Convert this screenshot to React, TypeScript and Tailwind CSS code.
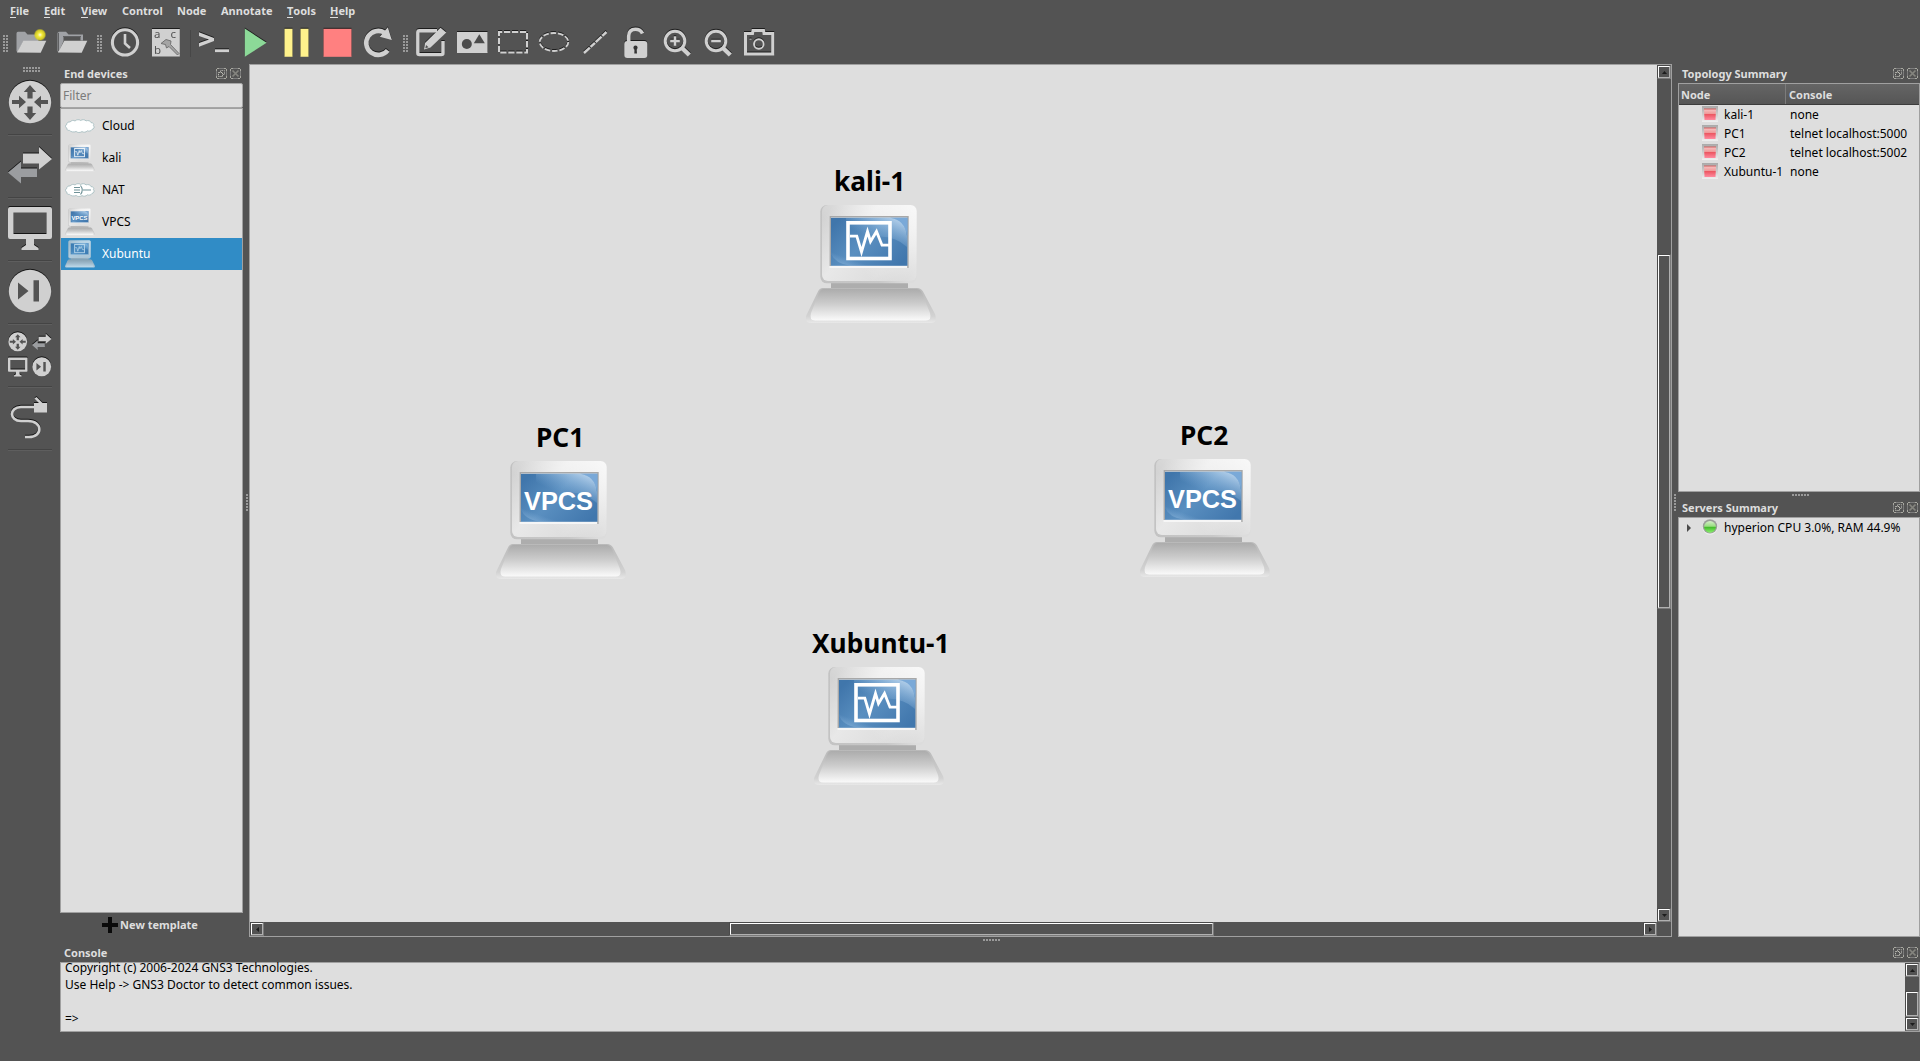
import React from 'react';

const UI = "font-['Noto_Sans','Open_Sans',sans-serif]";
const L = '#d0d0d0';

function Icon({ children, className = '' }: { children: React.ReactNode; className?: string }) {
  return (
    <div className="flex w-[41px] shrink-0 items-center justify-center">
      <svg viewBox="0 0 32 32" className={`h-8 w-8 shrink-0 drop-shadow-[0_-1px_0_rgba(20,20,20,0.85)] ${className}`}>
        {children}
      </svg>
    </div>
  );
}

function VDots({ rows = 6, cols = 2 }: { rows?: number; cols?: number }) {
  return (
    <div className="flex gap-[1px]">
      {Array.from({ length: cols }, (_, c) => (
        <div key={c} className="flex flex-col gap-[1px]">
          {Array.from({ length: rows }, (_, r) => (
            <div key={r} className="h-[2px] w-[2px] bg-[#9a9a9a]" />
          ))}
        </div>
      ))}
    </div>
  );
}

function HDots({ rows = 1 }: { rows?: number }) {
  return (
    <div className="flex flex-col gap-[1px]">
      {Array.from({ length: rows }, (_, r) => (
        <div key={r} className="flex gap-[1px]">
          {Array.from({ length: 6 }, (_, c) => (
            <div key={c} className="h-[2px] w-[2px] bg-[#9a9a9a]" />
          ))}
        </div>
      ))}
    </div>
  );
}

function MenuBar() {
  const items: [string, boolean, string][] = [
    ['File', true, 'w-[34px]'],
    ['Edit', true, 'w-[37px]'],
    ['View', true, 'w-[41px]'],
    ['Control', false, 'w-[55px]'],
    ['Node', false, 'w-[44px]'],
    ['Annotate', false, 'w-[66px]'],
    ['Tools', true, 'w-[43px]'],
    ['Help', true, 'w-[40px]'],
  ];
  return (
    <div className="flex h-[22px] items-center pl-[10px] text-[11px] font-bold">
      {items.map(([t, u, w]) => (
        <div key={t} className={`${w} shrink-0 whitespace-nowrap leading-[22px]`}>
          {u ? (
            <>
              <span className="inline-block h-[14px] border-b border-[#dedede] leading-[14px]">{t[0]}</span>
              {t.slice(1)}
            </>
          ) : (
            t
          )}
        </div>
      ))}
    </div>
  );
}

function Toolbar() {
  return (
    <div className="flex h-[42px] items-center">
      <div className="w-[10.5px] shrink-0 pl-[3px]"><VDots /></div>
      <Icon className="drop-shadow-none">
        <defs>
          <radialGradient id="glow">
            <stop offset="0" stopColor="#fffde0" />
            <stop offset="0.35" stopColor="#f3ea3c" />
            <stop offset="0.75" stopColor="#e2d81e" stopOpacity="0.85" />
            <stop offset="1" stopColor="#c9c020" stopOpacity="0" />
          </radialGradient>
        </defs>
        <path d="M1.5 24V6.5Q1.5 4.8 3 4.8H10L12.5 7.5H23.5V14H8.5L2.5 25.5Z" fill="#a0a2a6" />
        <path d="M2 25.5L8.3 13.8H31.3L25.7 25.7Z" fill={L} />
        <circle cx="25" cy="7.8" r="6.3" fill="url(#glow)" />
      </Icon>
      <Icon className="drop-shadow-none">
        <path d="M1.5 24V6.5Q1.5 4.8 3 4.8H10L12.5 7.5H27V13.5H24.5V10H7.5V14L2.5 25.5Z" fill="#a0a2a6" />
        <path d="M2.5 24V5.8M7 9.5H25" stroke="#2e2e2e" strokeWidth="0.8" opacity=".7" />
        <path d="M2 25.5L8.3 13.8H31.3L25.7 25.7Z" fill={L} />
      </Icon>
      <div className="w-3 shrink-0 pl-[4px]"><VDots /></div>
      <Icon>
        <circle cx="16" cy="15.4" r="12.6" fill="#4f4f4f" stroke={L} strokeWidth="3.1" />
        <path d="M16 7V16.5L21 21" fill="none" stroke={L} strokeWidth="2.6" />
      </Icon>
      <Icon>
        <rect x="2" y="2" width="27.8" height="27.5" fill={L} />
        <g fill="#535353" fontFamily="Noto Sans, sans-serif" fontSize="11.5">
          <text x="4" y="11">a</text>
          <text x="20.5" y="11">c</text>
          <text x="4" y="27">b</text>
        </g>
        <path d="M11 16.5L16 12.5L21 14L20.5 17.5L29 26.5L27.5 28L19 19.5L16.5 21L15.5 17.5Z" fill="#a5a5a5" stroke="#6b6b6b" strokeWidth="0.9" />
      </Icon>
      <div className="flex w-[7px] shrink-0 justify-center"><div className="h-[27px] w-px bg-[#474747]" /></div>
      <Icon>
        <path d="M1 5.2L16 11V14L1 19.8V16L11 12.6L1 9Z" fill={L} />
        <rect x="17" y="22.3" width="14" height="2.8" fill={L} />
      </Icon>
      <Icon><path d="M5.8 1.6L27.6 15.7L5.8 29.8Z" fill="#8cd998" /></Icon>
      <Icon><path d="M4.5 1.8H12.5V29.8H4.5ZM20.5 1.8H28.5V29.8H20.5Z" fill="#fff28c" /></Icon>
      <Icon><rect x="2.5" y="1.8" width="28" height="28" fill="#ff8080" /></Icon>
      <Icon>
        <path d="M25.7 23.3A12 12 0 1 1 22.4 5.6" fill="none" stroke={L} strokeWidth="4.6" />
        <path d="M25.8 0.3L29.8 13L17.8 9.8Z" fill={L} />
      </Icon>
      <div className="w-3 shrink-0 pl-[4px]"><VDots /></div>
      <Icon>
        <path d="M22 3.8H4.5Q2.8 3.8 2.8 5.5V26Q2.8 27.6 4.5 27.6H26.2Q28 27.6 28 26V14" fill="none" stroke={L} strokeWidth="3.4" />
        <path d="M9 22.5L10 16L25.5 0.8L31.3 5.5L15.5 20.5Z" fill={L} />
        <path d="M10.3 21.2L11 18L13.6 20.2Z" fill="#535353" />
      </Icon>
      <Icon>
        <rect x="1" y="5" width="30.5" height="21" fill={L} />
        <circle cx="10.8" cy="17" r="5" fill="#4c4c4c" />
        <path d="M23.3 7.3L28.8 16.2H17.8Z" fill="#4c4c4c" />
      </Icon>
      <Icon>
        <rect x="2" y="5" width="28" height="20.5" fill="none" stroke={L} strokeWidth="2" strokeDasharray="6.2 1.8" strokeDashoffset="3" />
      </Icon>
      <Icon>
        <ellipse cx="16" cy="15" rx="14.3" ry="9" fill="none" stroke={L} strokeWidth="1.8" strokeDasharray="5.6 1.8" />
      </Icon>
      <Icon>
        <path d="M5 26L27.5 5" stroke={L} strokeWidth="2.4" strokeDasharray="8 1 6 1" />
      </Icon>
      <Icon>
        <path d="M8.7 15V9Q8.7 2.3 15.5 2.3Q20.5 2.3 22.5 6.5" fill="none" stroke={L} strokeWidth="3.6" />
        <rect x="4.3" y="14" width="23" height="17" rx="3" fill={L} />
        <circle cx="15.5" cy="20.7" r="2.1" fill="#333" />
        <path d="M14.5 21H16.6L17 26.5H14.3Z" fill="#333" />
      </Icon>
      <Icon>
        <circle cx="14" cy="14" r="9.8" fill="none" stroke={L} strokeWidth="3" />
        <path d="M21 21L28.3 28" stroke={L} strokeWidth="4.4" />
        <path d="M14 9.2V18.8M9.2 14H18.8" stroke={L} strokeWidth="2.5" />
      </Icon>
      <Icon>
        <circle cx="14" cy="14" r="9.8" fill="none" stroke={L} strokeWidth="3" />
        <path d="M21 21L28.3 28" stroke={L} strokeWidth="4.4" />
        <path d="M9.2 14H18.8" stroke={L} strokeWidth="2.5" />
      </Icon>
      <Icon>
        <path d="M2.5 6.5H9.5L10 3.5H20.5L21 6.5H29.7V27H2.5Z" fill="none" stroke={L} strokeWidth="3" />
        <circle cx="15.8" cy="17" r="4.8" fill="none" stroke={L} strokeWidth="1.9" />
        <rect x="6.5" y="11.5" width="2" height="1.5" fill="#999" />
      </Icon>
    </div>
  );
}

const RouterGlyph = () => (
  <>
    <circle cx="22" cy="22" r="21.2" fill={L} />
    <path
      d="M22 5L28.2 12H24.6V18.5H19.4V12H15.8ZM22 40L28.2 33H24.6V26.5H19.4V33H15.8ZM4 20H11V15.8L18 22L11 28.2V24H4ZM40 20H33V15.8L26 22L33 28.2V24H40Z"
      fill="#535353"
    />
  </>
);
const ArrowsGlyph = () => (
  <>
    <path d="M0 29.5L13 18.5V25.5H29V34H13V40.5Z" fill="#9b9da0" />
    <path d="M15 10.5H31V4L44 16L31 26.5V20.5H15Z" fill={L} />
  </>
);
const MonitorGlyph = () => (
  <>
    <path d="M2 1H42Q44 1 44 3V31Q44 33 42 33H26V39L30.5 42V44H13.5V42L18 39V33H2Q0 33 0 31V3Q0 1 2 1ZM5.5 6.5V28H38.5V6.5Z" fillRule="evenodd" fill={L} />
  </>
);
const SecurityGlyph = () => (
  <>
    <circle cx="22" cy="22" r="21.2" fill={L} />
    <path d="M10 13.5L20.5 22L10 30.5ZM25.5 11.2H31V32.5H25.5Z" fill="#535353" />
  </>
);

function SideIcon({ children, size = 'h-[44px] w-[44px]' }: { children: React.ReactNode; size?: string }) {
  return (
    <svg viewBox="0 0 44 44" className={`${size} shrink-0 overflow-visible drop-shadow-[0_-1px_0_rgba(10,10,10,0.85)]`}>
      {children}
    </svg>
  );
}

function Sidebar() {
  const cell = 'flex h-[63px] w-[44px] items-center justify-center border-b border-[#444] pb-[2px] shadow-[0_1px_0_#5e5e5e]';
  return (
    <div className="flex w-[60px] shrink-0 flex-col items-center">
      <div className="flex h-[8px] w-full items-end justify-center pl-[3px]"><HDots rows={2} /></div>
      <div className={cell}><SideIcon><RouterGlyph /></SideIcon></div>
      <div className={cell}><SideIcon><ArrowsGlyph /></SideIcon></div>
      <div className={cell}><SideIcon><MonitorGlyph /></SideIcon></div>
      <div className={cell}><SideIcon><SecurityGlyph /></SideIcon></div>
      <div className={cell}>
        <div className="grid w-[44px] grid-cols-2 gap-x-[4.5px] gap-y-[5px]">
          <SideIcon size="h-[19.5px] w-[19.5px]"><RouterGlyph /></SideIcon>
          <SideIcon size="h-[19.5px] w-[19.5px]"><ArrowsGlyph /></SideIcon>
          <SideIcon size="h-[19.5px] w-[19.5px]"><MonitorGlyph /></SideIcon>
          <SideIcon size="h-[19.5px] w-[19.5px]"><SecurityGlyph /></SideIcon>
        </div>
      </div>
      <div className={cell}>
        <SideIcon>
          <path d="M27 12H13C1 12 1 26 13 26H20C35 26 35 42 21 42H17" fill="none" stroke={L} strokeWidth="2.6" />
          <path d="M26 8H31L26.5 3.5L28.5 2L34.5 8H39V17.5H26Z" fill={L} />
        </SideIcon>
      </div>
    </div>
  );
}

const FrameCorners = () => (
  <>
    <path d="M1 0.5H10M1 10.5H10M0.5 1V10M10.5 1V10" stroke="#7c7c7c" />
    <path d="M1 0.5H3M8 0.5H10M1 10.5H3M8 10.5H10M0.5 1V3M0.5 8V10M10.5 1V3M10.5 8V10" stroke="#a8a8a0" />
  </>
);

function DockButtons() {
  return (
    <div className="flex gap-[3px]">
      <svg viewBox="0 0 11 11" className="h-[11px] w-[11px]" fill="none">
        <FrameCorners />
        <path d="M4.5 4V2.5H8.5V6.5H7" stroke="#a4a4a0" strokeDasharray="1.6 0.8" />
        <rect x="2.5" y="4.5" width="4" height="4" stroke="#bcbcb4" strokeDasharray="1.4 0.8" />
      </svg>
      <svg viewBox="0 0 11 11" className="h-[11px] w-[11px]" fill="none">
        <FrameCorners />
        <path d="M2.5 2.5L8.5 8.5M8.5 2.5L2.5 8.5" stroke="#85857f" strokeWidth="1.7" />
      </svg>
    </div>
  );
}

function DockTitle({ children }: { children: React.ReactNode }) {
  return (
    <div className="flex h-[19px] shrink-0 items-center justify-between pl-[4px] pr-[2px] text-[11px] font-bold">
      <span className="pt-[2px]">{children}</span>
      <DockButtons />
    </div>
  );
}

function Computer({ kind, className, x = '' }: { kind: 'vbox' | 'vpcs'; className: string; x?: string }) {
  return (
    <svg viewBox="0 0 130 118" className={`${className} shrink-0 ${x}`}>
      <defs>
        <linearGradient id="case" x1="0" y1="0.2" x2="1" y2="0.8">
          <stop offset="0" stopColor="#d3d3d3" />
          <stop offset="0.35" stopColor="#e8e8e8" />
          <stop offset="0.75" stopColor="#dedede" />
          <stop offset="1" stopColor="#d0d0d0" />
        </linearGradient>
        <linearGradient id="caseTop" x1="0" y1="0.6" x2="1" y2="0">
          <stop offset="0.2" stopColor="#fff" stopOpacity="0" />
          <stop offset="1" stopColor="#fff" stopOpacity="0.8" />
        </linearGradient>
        <linearGradient id="edge" x1="0" y1="0" x2="1" y2="0.1">
          <stop offset="0" stopColor="#c2c2c2" />
          <stop offset="0.7" stopColor="#c8c8c8" />
          <stop offset="1" stopColor="#dcdcdc" />
        </linearGradient>
        <linearGradient id="scr" x1="0" y1="0.2" x2="1" y2="0.8">
          <stop offset="0" stopColor="#4076ab" />
          <stop offset="0.45" stopColor="#5a8fc0" />
          <stop offset="1" stopColor="#4177ad" />
        </linearGradient>
        <linearGradient id="gloss" x1="0.3" y1="0.6" x2="0.9" y2="0">
          <stop offset="0" stopColor="#8db8e0" stopOpacity="0" />
          <stop offset="1" stopColor="#c5dcf2" stopOpacity="0.95" />
        </linearGradient>
        <linearGradient id="gloss2" x1="0.5" y1="0.3" x2="0" y2="1">
          <stop offset="0.3" stopColor="#8db8e0" stopOpacity="0" />
          <stop offset="1" stopColor="#a5c6e4" stopOpacity="0.7" />
        </linearGradient>
        <linearGradient id="base" x1="0" y1="0" x2="0" y2="1">
          <stop offset="0" stopColor="#acacac" />
          <stop offset="0.45" stopColor="#cbcbcb" />
          <stop offset="1" stopColor="#fafafa" />
        </linearGradient>
        <linearGradient id="baseEdge" x1="0" y1="0" x2="0" y2="1">
          <stop offset="0" stopColor="#b9b9b9" />
          <stop offset="0.8" stopColor="#d2d2d2" />
          <stop offset="1" stopColor="#e8e8e8" />
        </linearGradient>
      </defs>
      <rect x="25" y="74" width="77" height="10" fill="#adadad" />
      <path d="M17 83H111Q115 83 117 86.5L129 109Q132 118 124.5 118H5.5Q-2 118 0.5 110L12 86.5Q13.5 83 17 83Z" fill="url(#baseEdge)" />
      <path d="M17.5 84H110.5Q114 84 116 88L124 108Q126 115.5 120 115.5H9Q3 115.5 5 108L13 88Q14.5 84 17.5 84Z" fill="url(#base)" />
      <rect x="14.3" y="0" width="96.4" height="78.3" rx="6.5" fill="url(#edge)" />
      <rect x="16" y="0" width="94.7" height="76" rx="6" fill="url(#case)" />
      <rect x="16" y="0" width="94.7" height="76" rx="6" fill="url(#caseTop)" />
      <path d="M23.5 11H102.7V63H23.5Z" fill="#f6f6f6" />
      <path d="M23.5 11H102.7V63H101.2V12.5H25V61H23.5Z" fill="#a8a8a8" />
      <rect x="25" y="12.8" width="76.4" height="48" fill="url(#scr)" />
      <path d="M84 12.8H101.4V31Q98 15 84 12.8Z" fill="#7aa9d8" />
      <path d="M40 12.8H84Q99 15 101 31V42Q80 22 40 40Z" fill="url(#gloss)" />
      <path d="M25 42Q50 52 62 60.8H44Q28 58 25 48Z" fill="url(#gloss2)" />
      {kind === 'vbox' ? (
        <>
          <rect x="42" y="17.8" width="42" height="35.7" fill="none" stroke="#fff" strokeWidth="3.6" />
          <path d="M44 31.2H50.8L55.5 47L61.5 26.5L64.5 36.5L70.5 26.5L76 40.2H83" fill="none" stroke="#fff" strokeWidth="2.8" />
        </>
      ) : (
        <text x="62.5" y="48.5" textAnchor="middle" textLength="69" lengthAdjust="spacingAndGlyphs" fill="#fff" fontFamily="Liberation Sans, Arial, sans-serif" fontWeight="700" fontSize="25.5">
          VPCS
        </text>
      )}
    </svg>
  );
}

function Cloud({ nat = false }: { nat?: boolean }) {
  return (
    <svg viewBox="0 0 30 14" className="h-[14px] w-[30px] shrink-0">
      <path
        d="M4.5 11.4C2.5 11.6 1.6 10.6 2 9.3C0 8.6 0 6 1.8 5.4C1.6 3.4 3.6 2.6 5.2 3C6.2 1.2 8.6 1 10 2C11.6 0.3 14.4 0.4 15.6 1.5C17.4 0.2 20 0.6 21 1.9C23.2 1 25.6 1.9 26 3.6C28.2 3.6 29.4 5.2 28.4 6.6C29.8 8 29 10.2 27 10.4C26.4 12 24 12.6 22.4 11.8C21 13.4 18.4 13.6 17 12.6C15 13.9 12.4 13.7 11.2 12.5C9 13.4 5.6 13 4.5 11.4Z"
        fill="#fff"
        stroke="#9fb9bd"
        strokeWidth="0.8"
      />
      {nat && <path d="M9 4.5H15M9 7H15M9 9.5H15M15.5 2.5Q19 7 15.5 11.5M18 7H26" fill="none" stroke="#6f9197" strokeWidth="1.1" />}
    </svg>
  );
}

function EndDevices() {
  const rows = [
    { name: 'Cloud', icon: <Cloud /> },
    { name: 'kali', icon: <Computer kind="vbox" className="h-[28px] w-[30px]" /> },
    { name: 'NAT', icon: <Cloud nat /> },
    { name: 'VPCS', icon: <Computer kind="vpcs" className="h-[28px] w-[30px]" /> },
    { name: 'Xubuntu', icon: <Computer kind="vbox" className="h-[28px] w-[30px]" x="opacity-70" />, sel: true },
  ];
  return (
    <div className="flex w-[183px] shrink-0 flex-col">
      <DockTitle>End devices</DockTitle>
      <div className="flex h-[25px] shrink-0 items-center rounded-[2px] border border-[#a6a6a6] bg-[#dedede] pl-[2px] text-[12px] text-[#7b7b7b]">Filter</div>
      <div className="flex h-[805px] shrink-0 flex-col border border-[#a0a0a0] bg-[#dedede] text-black">
        {rows.map((r, i) => (
          <div key={r.name} className={`flex h-8 items-center gap-[7px] pl-[4px] text-[12px] ${i === 0 ? 'mt-px' : ''} ${r.sel ? 'bg-[#308cc6] text-white' : ''}`}>
            {r.icon}
            <span>{r.name}</span>
          </div>
        ))}
      </div>
      <div className="flex h-6 items-center justify-center pr-[3px] text-[11px] font-bold">
        <svg viewBox="0 0 16 16" className="mr-[2px] h-4 w-4"><path d="M6 0H10V6H16V10H10V16H6V10H0V6H6Z" fill="#0a0a0a" /></svg>
        New template
      </div>
    </div>
  );
}

function ScrollButton({ dir }: { dir: 'up' | 'down' | 'left' | 'right' }) {
  const d = {
    up: 'M1 5L3.5 2L6 5Z',
    down: 'M1 2L3.5 5L6 2Z',
    left: 'M5 1L2 3.5L5 6Z',
    right: 'M2 1L5 3.5L2 6Z',
  }[dir];
  return (
    <div className="flex h-[14px] w-[14px] shrink-0 border border-b-[#7a7a7a] border-l-[#4a4a4a] border-r-[#7a7a7a] border-t-[#4a4a4a]">
      <div className="flex h-3 w-3 items-center justify-center border border-b-[#b0b0b0] border-l-white border-r-[#b0b0b0] border-t-white">
        <svg viewBox="0 0 7 7" className="h-[7px] w-[7px]"><path d={d} fill="#1c1c1c" /></svg>
      </div>
    </div>
  );
}

function Thumb({ size }: { size: string }) {
  return (
    <div className={`flex ${size} shrink-0 border border-b-[#7a7a7a] border-l-[#4a4a4a] border-r-[#7a7a7a] border-t-[#4a4a4a]`}>
      <div className="flex-1 border border-b-[#b0b0b0] border-l-white border-r-[#b0b0b0] border-t-white" />
    </div>
  );
}

const NODES = [
  { name: 'kali-1', kind: 'vbox' as const, icon: 'left-[556px] top-[140px]', label: 'left-[584px] top-[98px]' },
  { name: 'PC1', kind: 'vpcs' as const, icon: 'left-[246px] top-[396px]', label: 'left-[286px] top-[354px]' },
  { name: 'PC2', kind: 'vpcs' as const, icon: 'left-[890px] top-[394px]', label: 'left-[930px] top-[352px]' },
  { name: 'Xubuntu-1', kind: 'vbox' as const, icon: 'left-[564px] top-[602px]', label: 'left-[562px] top-[560px]' },
];

function Canvas() {
  return (
    <div className="flex w-[1423px] shrink-0 flex-col border border-[#a0a0a0]">
      <div className="flex h-[857px]">
        <div className="relative h-full w-[1407px] shrink-0 overflow-hidden bg-[#dedede] text-black">
          {NODES.map((n) => (
            <React.Fragment key={n.name}>
              <div className={`absolute ${n.icon}`}>
                <Computer kind={n.kind} className="h-[118px] w-[130px]" />
              </div>
              <div className={`absolute whitespace-nowrap text-[26.3px] font-bold leading-[36px] ${n.label}`}>{n.name}</div>
            </React.Fragment>
          ))}
        </div>
        <div className="flex w-[14px] flex-col">
          <ScrollButton dir="up" />
          <div className="flex-1 pt-[175px]"><Thumb size="h-[355px] w-[14px]" /></div>
          <ScrollButton dir="down" />
        </div>
      </div>
      <div className="flex h-[14px]">
        <ScrollButton dir="left" />
        <div className="w-[1379px] pl-[465px]"><Thumb size="h-[14px] w-[485px]" /></div>
        <ScrollButton dir="right" />
      </div>
    </div>
  );
}

function RedStatus() {
  return (
    <svg viewBox="0 0 16 16" className="h-4 w-4 shrink-0">
      <defs>
        <linearGradient id="red" x1="0" y1="0" x2="0" y2="1">
          <stop offset="0" stopColor="#f6c4c4" />
          <stop offset="0.42" stopColor="#f09a9a" />
          <stop offset="0.48" stopColor="#ec5560" />
          <stop offset="1" stopColor="#ff8a9f" />
        </linearGradient>
        <linearGradient id="redFrame" x1="0" y1="0" x2="0" y2="1">
          <stop offset="0" stopColor="#a9a9a9" />
          <stop offset="1" stopColor="#efefef" />
        </linearGradient>
      </defs>
      <rect x="0" y="0" width="16" height="16" fill="url(#redFrame)" />
      <path d="M2 3H14L13.5 14H2.5Z" fill="url(#red)" />
      <path d="M2 3H14" stroke="#cc4444" strokeWidth="0.8" />
    </svg>
  );
}

function RightDocks() {
  const rows = [
    ['kali-1', 'none'],
    ['PC1', 'telnet localhost:5000'],
    ['PC2', 'telnet localhost:5002'],
    ['Xubuntu-1', 'none'],
  ];
  return (
    <div className="flex w-[242px] shrink-0 flex-col">
      <DockTitle>Topology Summary</DockTitle>
      <div className="flex h-[409px] shrink-0 flex-col border border-[#a0a0a0] bg-[#dedede] text-black">
        <div className="flex h-[21px] shrink-0 items-center border-b border-[#3c3c3c] bg-gradient-to-b from-[#656565] to-[#565656] text-[11px] font-bold text-[#dedede]">
          <div className="flex h-full w-[107px] items-center border-r border-[#7c7c7c] pl-[2px] pt-[2px]">Node</div>
          <div className="pl-[3px] pt-[2px]">Console</div>
        </div>
        {rows.map(([a, b]) => (
          <div key={a} className="flex h-[19px] items-center whitespace-nowrap pl-[23px] text-[12px]">
            <div className="-mt-[2px]"><RedStatus /></div>
            <span className="w-[66px] shrink-0 pl-[6px]">{a}</span>
            <span className="pl-[6px]">{b}</span>
          </div>
        ))}
      </div>
      <div className="flex h-[6px] items-center justify-center pl-[3px]"><HDots /></div>
      <DockTitle>Servers Summary</DockTitle>
      <div className="h-[420px] border border-[#a0a0a0] bg-[#dedede] text-black">
        <div className="flex h-[19px] items-center pl-[8px] text-[12px]">
          <svg viewBox="0 0 4 8" className="h-2 w-1"><path d="M0 0L4 4L0 8Z" fill="#4a4a4a" /></svg>
          <svg viewBox="0 0 16 16" className="-mt-[2px] ml-[11px] h-4 w-4">
            <defs>
              <linearGradient id="grn" x1="0" y1="0" x2="0" y2="1">
                <stop offset="0" stopColor="#d4eec8" />
                <stop offset="0.45" stopColor="#9ade82" />
                <stop offset="0.55" stopColor="#45bd2c" />
                <stop offset="1" stopColor="#8cf070" />
              </linearGradient>
            </defs>
            <circle cx="8" cy="8.2" r="7.6" fill="#efefef" />
            <circle cx="8" cy="7.4" r="7.2" fill="#9a9f98" />
            <circle cx="8" cy="7.8" r="5.9" fill="url(#grn)" />
          </svg>
          <span className="whitespace-nowrap pl-[6px]">hyperion CPU 3.0%, RAM 44.9%</span>
        </div>
      </div>
    </div>
  );
}

function Console() {
  return (
    <>
      <DockTitle>Console</DockTitle>
      <div className="flex h-[70px] shrink-0 border border-[#a0a0a0] bg-[#dedede] text-black">
        <div className="h-full flex-1 pl-[4px] text-[12px] leading-[17px]">
          <div className="-mt-[4px]">
            <p>Copyright (c) 2006-2024 GNS3 Technologies.</p>
            <p>Use Help -&gt; GNS3 Doctor to detect common issues.</p>
            <p>&nbsp;</p>
            <p>=&gt;</p>
          </div>
        </div>
        <div className="flex w-[14px] flex-col bg-[#535353]">
          <ScrollButton dir="up" />
          <div className="flex-1 pt-[14px]"><Thumb size="h-[26px] w-[14px]" /></div>
          <ScrollButton dir="down" />
        </div>
      </div>
    </>
  );
}

export default function App() {
  return (
    <div className={`flex h-[1061px] w-[1920px] flex-col overflow-hidden bg-[#535353] text-[#dedede] ${UI}`}>
      <MenuBar />
      <Toolbar />
      <div className="flex flex-1">
        <Sidebar />
        <div className="flex w-[1860px] flex-col">
          <div className="flex h-[873px] shrink-0">
            <EndDevices />
            <div className="flex w-[6px] items-center justify-end pr-[1px] pt-[4px]"><VDots cols={1} /></div>
            <Canvas />
            <div className="flex w-[6px] items-center justify-center pt-[4px]"><VDots cols={1} /></div>
            <RightDocks />
          </div>
          <div className="flex h-[6px] shrink-0 items-center pl-[923px]"><HDots /></div>
          <Console />
        </div>
      </div>
    </div>
  );
}
